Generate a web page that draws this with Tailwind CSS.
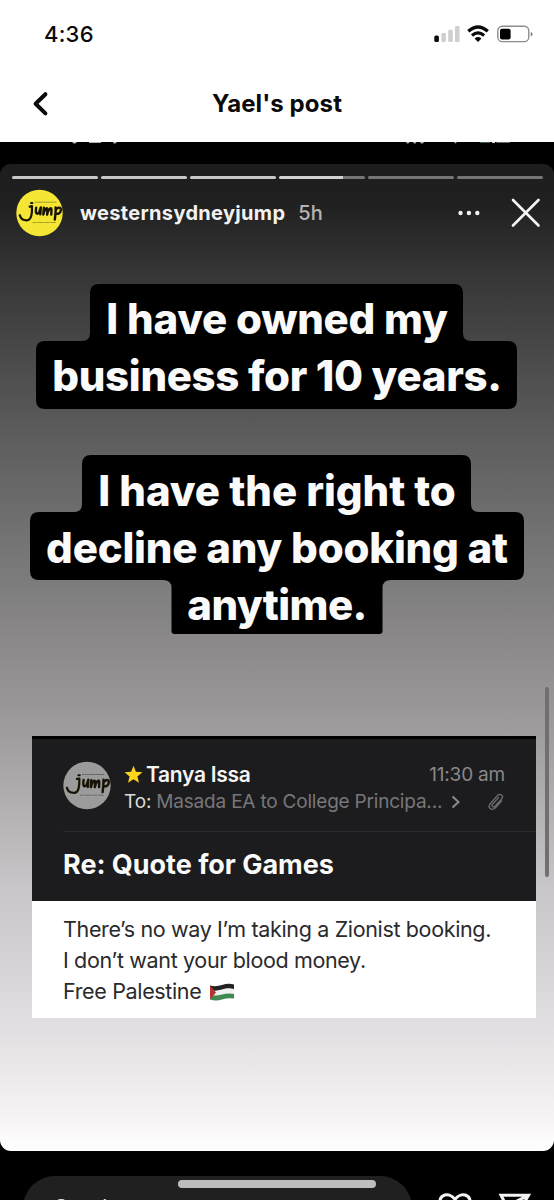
<!DOCTYPE html>
<html lang="en">
<head>
<meta charset="utf-8">
<title>Yael's post</title>
<script src="https://cdn.jsdelivr.net/npm/@tailwindcss/browser@4"></script>
</head>
<body class="w-[554px] h-[1200px] overflow-hidden bg-white font-['Inter','Liberation_Sans',sans-serif]">
<div class="flex h-[1200px] w-[554px] flex-col overflow-hidden relative">
  <header class="h-[142px] shrink-0 bg-white text-[#0a0a0a]">
    <div class="flex h-[68px] items-center justify-between pl-[44px] pr-[21px]">
      <span class="text-[22px] font-medium leading-[28px] tracking-[.25px]">4:36</span>
      <svg class="h-[24px] w-[100px]" viewBox="433 22 100 24" fill="none">
        <rect x="434.300" y="35.500" width="4.600" height="6.500" rx="1.500" fill="#0a0a0a"/>
        <rect x="441.300" y="33" width="4.600" height="9" rx="1.300" fill="#cfcfcf"/>
        <rect x="448.200" y="29.800" width="4.600" height="12.200" rx="1.300" fill="#cfcfcf"/>
        <rect x="455" y="26" width="4.600" height="16" rx="1.300" fill="#cfcfcf"/>
        <path d="M468.300 31.200Q478 22.600 487.800 31.200" stroke="#0a0a0a" stroke-width="3.400"/>
        <path d="M472 35.400Q478 30.400 484.100 35.400" stroke="#0a0a0a" stroke-width="3.200"/>
        <path d="M474.600 38.400Q478 35.600 481.500 38.400L478 42Z" fill="#0a0a0a"/>
        <rect x="497.800" y="26.200" width="31" height="15.400" rx="4.600" stroke="#8d8d8d" stroke-width="1.400"/>
        <rect x="500" y="28.800" width="10.600" height="10.600" rx="2" fill="#000"/>
        <path d="M530.800 32v4.400q1.700-.6 1.700-2.200t-1.700-2.200z" fill="#777"/>
      </svg>
    </div>
    <div class="grid h-[70px] grid-cols-[60px_1fr_60px] items-center">
      <svg class="ml-[30px] mt-px h-[28px] w-[20px]" viewBox="30 90 20 28" fill="none" stroke="#0a0a0a" stroke-width="4" stroke-linecap="round" stroke-linejoin="round"><path d="M45.400 94.200L35.600 103.800L45.400 113.400"/></svg>
      <h1 class="pt-[2px] text-center text-[24px] font-bold leading-[30px] tracking-[.1px]">Yael's post</h1>
    </div>
  </header>

  <main class="flex flex-1 flex-col bg-black">
    <div class="h-[22px] shrink-0">
      <svg class="h-[4px] w-full" viewBox="0 0 554 4" fill="#d0d0d0"><path d="M72 0h5l-1.500 1.500h-2zM89 0h12v1H89zM113 0h4l-1.500 1.500h-2zM406 0h3.500l-1 1.500h-1.500zM413 0h3.500l-1 1.500h-1.500zM420 0h4l-1 1.500h-2zM454 0h3l-1.500 1.500z" opacity=".85"/><path d="M480 0h10v1h-10z" fill="#3a5c44"/><path d="M492 0h3v1h-3z"/><path d="M496 0h15l-2 1h-12z" fill="#666"/></svg>
    </div>
    <section class="flex h-[987px] shrink-0 flex-col rounded-[11px] bg-linear-[180deg,#1d1d1d_0%,#202020_4%,#373737_11.5%,#606060_29%,#8a8888_48%,#9f9d9d_58%,#c7c5c7_73%,#e0dee0_87%,#f8f4f6_97%,#ffffff_100%]">
      <div class="flex gap-[3px] px-[11.500px] pt-[12px]">
        <i class="h-[3px] flex-1 rounded-full bg-[#c8c8c8]"></i><i class="h-[3px] flex-1 rounded-full bg-[#c8c8c8]"></i><i class="h-[3px] flex-1 rounded-full bg-[#c8c8c8]"></i><i class="h-[3px] flex-1 rounded-full bg-linear-[90deg,#d2d2d2_74%,#757575_75%]"></i><i class="h-[3px] flex-1 rounded-full bg-[#757575]"></i><i class="h-[3px] flex-1 rounded-full bg-[#757575]"></i>
      </div>
      <div class="mt-[10px] flex h-[48px] items-center pl-[16px] pr-[13px]">
        <svg class="mr-[17px] h-[48px] w-[47px]" viewBox="0 0 47 48">
          <circle cx="23.500" cy="24" r="23.200" fill="#f5e636"/>
          <g id="jumpmark" fill="none" stroke="#171405" stroke-linecap="round" stroke-linejoin="round">
            <path d="M13.600 17.600L16 17.200C16.200 24 15.600 31.300 10.800 31.300C6.800 31.200 4.400 28.700 3.800 26.200" stroke-width="2.200"/>
            <path d="M15 13.900h1.400" stroke-width="2"/>
            <path d="M20.200 18.600C19.200 25 20.800 26 23.200 23.200L24.800 18.400L24.300 25.400M27.800 18.800L27.300 25.600C28.500 20 31.600 17.400 31.500 20.800L31.100 25.600C32.600 19.800 35.400 17.400 35.500 20.800L35.300 25.600M39.600 18.400C39.800 22 39.200 27.500 38.800 30.500M39.600 21.600C41.500 17.500 45.200 18 44.900 21C44.600 24.500 41.700 25.500 39.600 24.200" stroke-width="2.400"/>
            <path d="M19 13.200H41" stroke-width=".8" stroke-dasharray="1.200 1" opacity=".5"/>
            <path d="M17 33.500H41" stroke-width=".9" stroke-dasharray="3 1.500 1 1" opacity=".4"/>
          </g>
        </svg>
        <span class="text-[20px] font-bold leading-[26px] tracking-[.32px] text-[#f2f2f2]">westernsydneyjump</span>
        <span class="ml-[13px] text-[20px] font-medium leading-[26px] text-[#b5b5b5]">5h</span>
        <svg class="ml-auto h-[32px] w-[84px]" viewBox="457 197 84 32" fill="#f2f2f2"><circle cx="460.500" cy="213" r="2.200"/><circle cx="468.900" cy="213" r="2.200"/><circle cx="477.300" cy="213" r="2.200"/><path d="M513 200L538.500 225.500M538.500 200L513 225.500" stroke="#f5f5f5" stroke-width="2.600" stroke-linecap="round"/></svg>
      </div>

      <div class="relative mx-[30px] mt-[47px] h-[125px] text-center text-[42px] font-extrabold leading-[57px] text-[#fafafa]">
        <svg class="absolute inset-0 h-[125px] w-[494px]" viewBox="30 284 494 125"><path d="M99 284H454Q463 284 463 293V333Q463 341 471 341H508Q517 341 517 350V400Q517 409 508 409H45Q36 409 36 400V350Q36 341 45 341H82Q90 341 90 333V293Q90 284 99 284Z"/></svg>
        <p class="relative pt-[6px]"><span class="tracking-[-.25px]">I have owned my</span><br><span class="tracking-[-.34px]">business for 10 years.</span></p>
      </div>
      <div class="relative mx-[30px] mt-[46px] h-[179px] text-center text-[42px] font-extrabold leading-[57px] text-[#fafafa]">
        <svg class="absolute inset-0 h-[179px] w-[494px]" viewBox="30 455 494 179"><path d="M91 455H462Q471 455 471 464V504Q471 512 479 512H515Q524 512 524 521V571Q524 580 515 580H391Q382.500 580 382.500 588V631Q382.500 634 379.500 634H174.500Q171.500 634 171.500 631V588Q171.500 580 163 580H39Q30 580 30 571V521Q30 512 39 512H74Q82 512 82 504V464Q82 455 91 455Z"/></svg>
        <p class="relative pt-[7px]"><span class="tracking-[-.06px]">I have the right to</span><br><span class="tracking-[-.22px]">decline any booking at</span><br><span class="tracking-[-.6px]">anytime.</span></p>
      </div>

      <article class="mx-[32px] mt-[102px] w-[504px]">
        <div class="h-[165px] border-t-[3px] border-black bg-[#1c1c1e] pl-[31px]">
          <div class="flex h-[93px] items-start border-b border-[#2b2b2d] pr-[31px]">
            <svg class="mt-[22px] h-[49px] w-[48px]" viewBox="0 0 47 48"><circle cx="23.500" cy="24" r="23.200" fill="#9b9b9b"/><use href="#jumpmark"/></svg>
            <div class="ml-[13px] mt-[22px] flex-1">
              <div class="flex h-[27px] items-center">
                <svg class="mr-[3px] -mt-px h-[19px] w-[19px]" viewBox="0 0 20 20"><path d="M10 .8L12.500 7.200L19.400 7.600L14.100 12L15.800 18.700L10 15L4.200 18.700L5.900 12L.6 7.600L7.500 7.200Z" fill="#fdd31c"/></svg>
                <span class="text-[21px] font-semibold tracking-[-.28px] text-[#f4f4f4]">Tanya Issa</span>
                <span class="ml-auto pt-[2px] text-[19px] tracking-[-.2px] text-[#88888b]">11:30 am</span>
              </div>
              <div class="flex h-[28px] items-center text-[19px] text-[#77777a]">
                <span class="text-[#dcdcdc] tracking-[-.1px]">To:</span><span class="ml-[5px] tracking-[-.2px]">Masada EA to College Principa...</span>
                <svg class="ml-[9px] h-[14px] w-[10px]" viewBox="0 0 10 14" fill="none" stroke="#8c8c8f" stroke-width="2"><path d="M1.500 1.500L7.500 7L1.500 12.500"/></svg>
                <svg class="ml-auto h-[20px] w-[18px]" viewBox="0 0 18 20" fill="none" stroke="#6b6b6e" stroke-width="1.400" stroke-linecap="round"><path d="M14.500 9L8.500 15.800C4.500 19.500 .2 15.500 3.300 11.600L10.500 3.600C13.300 .8 17 3.800 14.700 6.900L8 14.200C6.200 15.900 4 14 5.500 12.200L11.500 5.600"/></svg>
              </div>
            </div>
          </div>
          <h2 class="mt-[16px] text-[27px] font-bold leading-[34px] tracking-[-.02px] text-[#fafafa]">Re: Quote for Games</h2>
        </div>
        <div class="h-[117px] bg-white pl-[31px] pt-[13px] text-[21.500px] leading-[31px] tracking-[-.35px] text-[#2a2a2c]">
          <p>There’s no way I’m taking a Zionist booking.</p>
          <p>I don’t want your blood money.</p>
          <p class="flex items-center"><span>Free Palestine</span>
            <svg class="ml-[8px] h-[18px] w-[26px]" viewBox="0 0 26 18"><path d="M1 2.500Q7 4 13 2T25 1.500V6.500Q19 5 13 7T1 7.500Z" fill="#222"/><path d="M1 7Q7 8.500 13 6.500T25 6V11Q19 10 13 12T1 12Z" fill="#f1f1f1"/><path d="M1 12Q7 13 13 11.500T25 11V15.500Q19 14.500 13 16.500T1 16.500Z" fill="#3f8a50"/><path d="M1 2.500L7 9.500L1 16.500Z" fill="#b8322f"/></svg></p>
        </div>
      </article>
    </section>
    <div class="flex h-[49px] pl-[23px] pt-[25px]">
      <div class="h-[60px] w-[389px] shrink-0 rounded-t-[32px] bg-[#202020] pl-[31px]">
        <p class="pt-[18px] text-[22px] leading-[26px] text-[#d8d8d8]">Send message</p>
      </div>
      <svg class="ml-[26px] h-[24px] w-[100px]" viewBox="438 1176 100 24" fill="none" stroke="#f3f3f3" stroke-width="3"><path d="M440 1206C438 1193 450 1192 455 1199.500C460 1192 472 1193 470 1206M501 1195.300H528.500L514 1220ZM528 1195.500L509 1205"/></svg>
    </div>
  </main>
  <div class="absolute left-[178px] top-[1180px] h-[8px] w-[198px] rounded-full bg-[#bdbdbd]"></div>
  <div class="absolute left-[545px] top-[687px] h-[190px] w-[4px] rounded-full bg-[#707070]"></div>
</div>
</body>
</html>
